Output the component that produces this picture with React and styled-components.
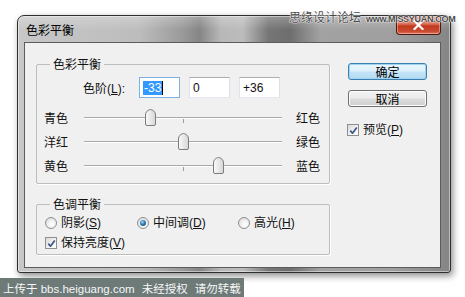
import React from "react";
import styled, { createGlobalStyle } from "styled-components";

const GlobalStyle = createGlobalStyle`
  html, body { margin:0; padding:0; background:#fff; }
  body {
    width:465px; height:297px; overflow:hidden;
    font-family:"Liberation Sans","Noto Sans CJK SC",sans-serif;
    font-size:12px; color:#111;
  }
`;

const Page = styled.div`
  position:relative;
  width:465px;
  height:297px;
  display:flex;
  flex-direction:column;
  align-items:flex-start;
`;

const Window = styled.div`
  margin:15px 0 0 17px;
  width:434px;
  height:258px;
  box-sizing:border-box;
  padding:0 9px 4px 6px;
  display:flex;
  flex-direction:column;
  border:1px solid #2e2e2e;
  border-radius:7px 7px 3px 3px;
  background:
    linear-gradient(180deg, rgba(255,255,255,.25) 0px, rgba(255,255,255,0) 14px),
    linear-gradient(90deg, #c7c7c7 0%, #bdbdbd 28%, #9a9a9a 38%, #858585 42%, #b8b8b8 47%, #bcbcbc 52%, #767676 58%, #6e6e6e 63%, #a2a2a2 70%, #a0a0a0 86%, #858585 100%);
  box-shadow: 2px 3px 7px rgba(0,0,0,.45), inset 0 0 0 1px rgba(255,255,255,.45);
`;

const TitleBar = styled.div`
  height:26px;
  display:flex;
  justify-content:space-between;
  align-items:flex-start;
`;

const Title = styled.div`
  margin:7px 0 0 2px;
  font-family:"Noto Sans CJK SC",sans-serif;
  font-size:12px;
  line-height:14px;
  color:#000;
`;

const CloseButton = styled.div`
  width:45px;
  height:19px;
  box-sizing:border-box;
  border:1px solid #4a1a12;
  border-top:none;
  border-radius:0 0 4px 4px;
  background:linear-gradient(180deg, #e8a48f 0%, #d9715a 45%, #c2391f 55%, #c84a30 85%, #e07a5f 100%);
  box-shadow: inset 0 0 0 1px rgba(255,220,210,.45);
  display:flex;
  align-items:center;
  justify-content:center;
`;

const Client = styled.div`
  flex:1;
  box-sizing:border-box;
  border:1px solid #5c5c5c;
  background:#f0f0f0;
  display:flex;
  align-items:flex-start;
`;

const LeftColumn = styled.div`
  padding:14px 0 0 11px;
  display:flex;
  flex-direction:column;
`;

const Group = styled.fieldset`
  margin:${p => p.$gap || 0}px 0 0 0;
  padding:${p => p.$pad || "0"};
  width:294px;
  box-sizing:border-box;
  min-width:0;
  border:1px solid #bdbdbd;
  border-radius:2px;
  box-shadow: 1px 1px 0 #fff;
`;

const Legend = styled.legend`
  margin-left:${p => p.$shift ?? 13}px;
  padding:0 3px;
  font-family:"Noto Sans CJK SC",sans-serif;
  font-size:12px;
  line-height:14px;
  color:#111;
`;

const LevelsRow = styled.div`
  display:flex;
  align-items:center;
  margin:6px 0 0 46px;
  height:21px;
  gap:9px;
`;

const LevelsLabel = styled.div`
  width:47px;
  white-space:nowrap;
`;

const Field = styled.div`
  width:41px;
  height:21px;
  box-sizing:border-box;
  padding:0 3px;
  display:flex;
  align-items:center;
  background:#fff;
  border:1px solid;
  border-color:${p => p.$focused ? "#7fb2e0" : "#abadb3 #dbdfe6 #e3e9ef #e2e3ea"};
  font-size:12px;
  color:#111;
`;

const Selected = styled.span`
  background:#3399ff;
  color:#fff;
  line-height:14px;
  padding:0 1px;
  border-right:1px solid #000;
`;

const Sliders = styled.div`
  margin:8px 0 5px 7px;
  display:grid;
  grid-template-columns:40px 198px auto;
  grid-auto-rows:24px;
  align-items:center;
`;

const SideLabel = styled.div`
  font-family:"Noto Sans CJK SC",sans-serif;
  font-size:12px;
  line-height:14px;
  margin-left:${p => p.$right ? "14px" : "0"};
`;

const Track = styled.div`
  position:relative;
  height:24px;
  &::before {
    content:"";
    position:absolute;
    left:0; right:0; top:11px;
    height:1px;
    background:#a9a9a9;
    border-bottom:1px solid #fff;
  }
  &::after {
    content:"";
    position:absolute;
    left:99px; top:13px;
    width:1px; height:4px;
    background:#9c9c9c;
  }
`;

const Thumb = styled.svg`
  position:absolute;
  top:3px;
  z-index:1;
`;

const RadioRow = styled.div`
  display:flex;
  align-items:center;
  height:20px;
`;

const Option = styled.label`
  display:flex;
  align-items:center;
  gap:4px;
  width:${p => p.$w ? `${p.$w}px` : "auto"};
  font-family:"Liberation Sans","Noto Sans CJK SC",sans-serif;
  font-size:12px;
  white-space:nowrap;
`;

const OptionText = styled.span`
  line-height:14px;
`;

const Radio = styled.span`
  width:12px;
  height:12px;
  box-sizing:border-box;
  border-radius:50%;
  border:1px solid #8e8f8f;
  background:radial-gradient(circle at 60% 65%, #fff 0%, #f2f2f2 40%, #d2d2d2 100%);
  display:flex;
  align-items:center;
  justify-content:center;
  &::after {
    content:"";
    display:${p => p.$on ? "block" : "none"};
    width:6px; height:6px;
    border-radius:50%;
    background:radial-gradient(circle at 40% 35%, #a9dcf7 0%, #2f7db3 45%, #0d3556 100%);
  }
`;

const Box = styled.span`
  width:12px;
  height:12px;
  box-sizing:border-box;
  border:1px solid #8e8f8f;
  background:linear-gradient(135deg, #d8d8d8 0%, #f4f4f4 60%, #fff 100%);
  display:flex;
  align-items:center;
  justify-content:center;
`;

const U = styled.span`
  text-decoration:underline;
`;

const RightColumn = styled.div`
  margin-left:18px;
  padding-top:20px;
  display:flex;
  flex-direction:column;
  gap:10px;
`;

const Button = styled.div`
  width:79px;
  height:17px;
  box-sizing:border-box;
  border-radius:3px;
  border:1px solid ${p => p.$default ? "#3c7fb1" : "#707070"};
  background:${p => p.$default
    ? "linear-gradient(180deg, #eaf6fd 0%, #dcf0fb 48%, #c4e4f6 52%, #b4dbf1 100%)"
    : "linear-gradient(180deg, #f3f3f3 0%, #ebebeb 48%, #dddddd 52%, #cfcfcf 100%)"};
  box-shadow:${p => p.$default ? "inset 0 0 0 1px #9ed3f3" : "inset 0 0 0 1px #fcfcfc"};
  display:flex;
  align-items:center;
  justify-content:center;
  font-family:"Noto Sans CJK SC",sans-serif;
  font-size:12px;
  color:#000;
`;

const PreviewRow = styled(Option)`
  margin:6px 0 0 -1px;
  height:14px;
`;

const TopMark = styled.div`
  position:absolute;
  top:8px;
  left:289px;
  display:flex;
  align-items:baseline;
  gap:5px;
  color:#4a4a4a;
  text-shadow:0 0 2px #fff, 0 0 1px #fff, 0 0 1px #fff;
  white-space:nowrap;
`;

const TopMarkCn = styled.span`
  font-family:"Noto Sans CJK SC",sans-serif;
  font-size:12px;
`;

const TopMarkUrl = styled.span`
  font-family:"Liberation Sans",sans-serif;
  font-size:9px;
  letter-spacing:-0.3px;
  font-weight:bold;
`;

const Band = styled.div`
  margin-top:5px;
  height:19px;
  box-sizing:border-box;
  padding:0 3px 0 3px;
  background:#6d7a78;
  color:#f6f6f6;
  display:flex;
  align-items:center;
  gap:7px;
  font-family:"Liberation Sans","Noto Sans CJK SC",sans-serif;
  font-size:11.5px;
  white-space:nowrap;
`;

const sliders = [
  { left: "青色", right: "红色", value: -33 },
  { left: "洋红", right: "绿色", value: 0 },
  { left: "黄色", right: "蓝色", value: 36 },
];

const levels = ["-33", "0", "+36"];

const CheckMark = () => (
  <svg width="9" height="9" viewBox="0 0 9 9">
    <path d="M1.3 4.6 L3.5 7.2 L7.8 1.4" fill="none" stroke="#3d5688" strokeWidth="1.7" strokeLinejoin="round" />
  </svg>
);

const SliderThumb = ({ value }) => {
  const pct = (value + 100) / 2;
  return (
    <Thumb width="11" height="17" viewBox="0 0 11 17" style={{ left: `calc(${pct}% - 5.5px)` }}>
      <defs>
        <linearGradient id="tg" x1="0" y1="0" x2="1" y2="0">
          <stop offset="0" stopColor="#fbfbfb" />
          <stop offset="1" stopColor="#d6d6d6" />
        </linearGradient>
      </defs>
      <path d="M0.5 6 Q0.5 1.5 5.5 0.5 Q10.5 1.5 10.5 6 L10.5 15 Q10.5 16.5 9 16.5 L2 16.5 Q0.5 16.5 0.5 15 Z" fill="url(#tg)" stroke="#7d7d7d" />
    </Thumb>
  );
};

export default function App() {
  return (
    <Page>
      <GlobalStyle />
      <Window>
        <TitleBar>
          <Title>色彩平衡</Title>
          <CloseButton>
            <svg width="11" height="10" viewBox="0 0 11 10">
              <path d="M1.5 1 L9.5 9 M9.5 1 L1.5 9" stroke="#fff" strokeWidth="2.2" strokeLinecap="square" />
            </svg>
          </CloseButton>
        </TitleBar>
        <Client>
          <LeftColumn>
            <Group>
              <Legend>色彩平衡</Legend>
              <LevelsRow>
                <LevelsLabel>色阶(<U>L</U>):</LevelsLabel>
                {levels.map((v, i) => (
                  <Field key={v} $focused={i === 0}>
                    {i === 0 ? <Selected>{v}</Selected> : v}
                  </Field>
                ))}
              </LevelsRow>
              <Sliders>
                {sliders.map(s => (
                  <React.Fragment key={s.left}>
                    <SideLabel>{s.left}</SideLabel>
                    <Track>
                      <SliderThumb value={s.value} />
                    </Track>
                    <SideLabel $right>{s.right}</SideLabel>
                  </React.Fragment>
                ))}
              </Sliders>
            </Group>
            <Group $gap={13} $pad="2px 0 1px 8px">
              <Legend $shift={5}>色调平衡</Legend>
              <RadioRow>
                <Option $w={92}><Radio /><OptionText>阴影(<U>S</U>)</OptionText></Option>
                <Option $w={101}><Radio $on /><OptionText>中间调(<U>D</U>)</OptionText></Option>
                <Option><Radio /><OptionText>高光(<U>H</U>)</OptionText></Option>
              </RadioRow>
              <RadioRow>
                <Option><Box><CheckMark /></Box><OptionText>保持亮度(<U>V</U>)</OptionText></Option>
              </RadioRow>
            </Group>
          </LeftColumn>
          <RightColumn>
            <Button $default>确定</Button>
            <Button>取消</Button>
            <PreviewRow><Box><CheckMark /></Box><OptionText>预览(<U>P</U>)</OptionText></PreviewRow>
          </RightColumn>
        </Client>
      </Window>
      <Band>
        <span>上传于 bbs.heiguang.com</span>
        <span>未经授权</span>
        <span>请勿转载</span>
      </Band>
      <TopMark>
        <TopMarkCn>思缘设计论坛</TopMarkCn>
        <TopMarkUrl>www.MISSYUAN.COM</TopMarkUrl>
      </TopMark>
    </Page>
  );
}
